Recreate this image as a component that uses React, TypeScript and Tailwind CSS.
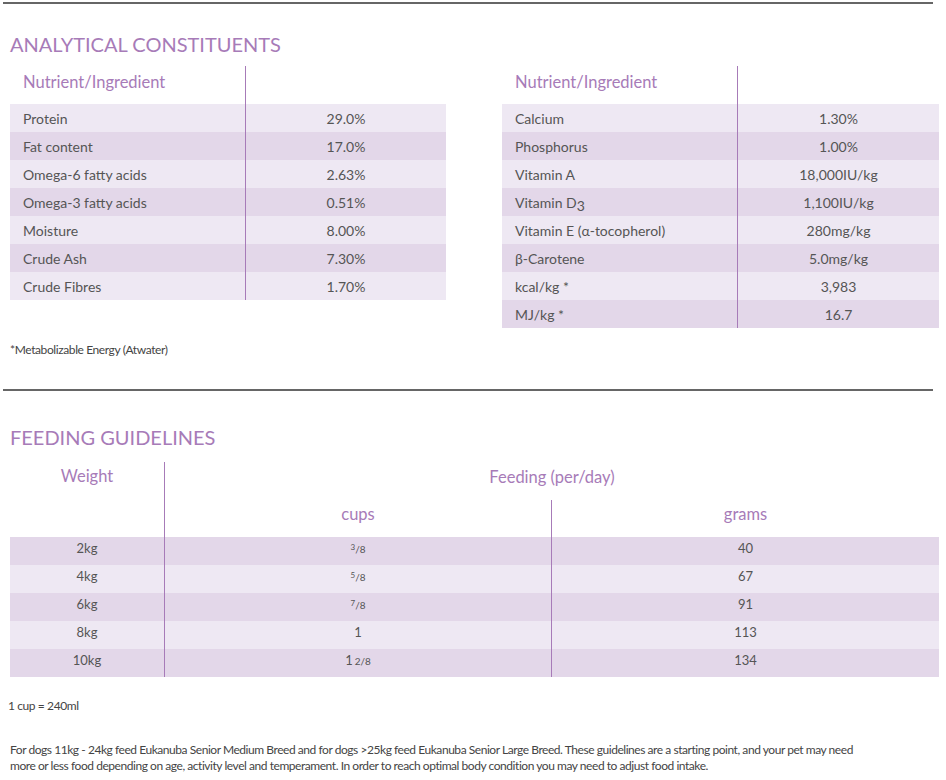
import React from 'react';

interface Row {
  name: React.ReactNode;
  value: string;
}

const leftRows: Row[] = [
  { name: 'Protein', value: '29.0%' },
  { name: 'Fat content', value: '17.0%' },
  { name: 'Omega-6 fatty acids', value: '2.63%' },
  { name: 'Omega-3 fatty acids', value: '0.51%' },
  { name: 'Moisture', value: '8.00%' },
  { name: 'Crude Ash', value: '7.30%' },
  { name: 'Crude Fibres', value: '1.70%' },
];

const rightRows: Row[] = [
  { name: 'Calcium', value: '1.30%' },
  { name: 'Phosphorus', value: '1.00%' },
  { name: 'Vitamin A', value: '18,000IU/kg' },
  {
    name: (
      <>
        Vitamin D<span className="relative top-[3px]">3</span>
      </>
    ),
    value: '1,100IU/kg',
  },
  { name: 'Vitamin E (α-tocopherol)', value: '280mg/kg' },
  { name: 'β-Carotene', value: '5.0mg/kg' },
  { name: 'kcal/kg *', value: '3,983' },
  { name: 'MJ/kg *', value: '16.7' },
];

function Frac({ n }: { n: string }) {
  return (
    <span className="text-[10px]">
      <span className="relative -top-[3px] text-[8px]">{n}</span>/8
    </span>
  );
}

const feeding = [
  { weight: '2kg', cups: <Frac n="3" />, grams: '40' },
  { weight: '4kg', cups: <Frac n="5" />, grams: '67' },
  { weight: '6kg', cups: <Frac n="7" />, grams: '91' },
  { weight: '8kg', cups: <span className="text-[13px]">1</span>, grams: '113' },
  {
    weight: '10kg',
    cups: (
      <>
        <span className="text-[13px]">1</span>
        <span className="ml-[2px] text-[10px]">2/8</span>
      </>
    ),
    grams: '134',
  },
];

const NutrientTable = ({ rows, width }: { rows: Row[]; width: string }) => (
  <div className={width}>
    <div className="flex h-[38px]">
      <div className="flex w-[236px] items-center border-r border-[#a77bb8] pb-[6px] pl-[13px] text-[16.5px] text-[#a77bb8]">
        Nutrient/Ingredient
      </div>
      <div className="flex-1" />
    </div>
    {rows.map((row, i) => (
      <div
        key={i}
        className={`flex h-[28px] text-[14px] text-[#555] ${
          i % 2 === 0 ? 'bg-[#eee8f3]' : 'bg-[#e3d7e9]'
        }`}
      >
        <div className="flex w-[236px] items-center border-r border-[#a77bb8] pl-[13px]">
          {row.name}
        </div>
        <div className="flex flex-1 items-center justify-center">
          {row.value}
        </div>
      </div>
    ))}
  </div>
);

export default function App() {
  return (
    <div
      className="w-[946px] bg-white pt-[2px]"
      style={{ fontFamily: 'Lato, "Noto Sans", sans-serif' }}
    >
      <div className="ml-[3px] w-[930px] border-t-2 border-[#666]" />

      <h2 className="ml-[10px] mt-[28px] text-[20px] leading-[24px] text-[#a77bb8]">
        ANALYTICAL CONSTITUENTS
      </h2>

      <div className="ml-[10px] mt-[10px] flex items-start gap-[56px]">
        <NutrientTable rows={leftRows} width="w-[436px]" />
        <NutrientTable rows={rightRows} width="w-[437px]" />
      </div>

      <p className="ml-[10px] mt-[14px] text-[12px] leading-[16px] tracking-[-0.4px] text-[#444]">
        *Metabolizable Energy (Atwater)
      </p>

      <div className="ml-[3px] mt-[31px] w-[930px] border-t-2 border-[#666]" />

      <h2 className="ml-[10px] mt-[34px] text-[20px] leading-[24px] text-[#a77bb8]">
        FEEDING GUIDELINES
      </h2>

      <div className="ml-[10px] mt-[13px] w-[929px]">
        <div className="grid grid-cols-[155px_387px_387px] grid-rows-[38px_37px] text-[16.5px] text-[#a77bb8]">
          <div className="row-span-2 flex justify-center border-r border-[#a77bb8] pt-[2px]">
            Weight
          </div>
          <div className="col-span-2 flex items-center justify-center pb-[8px]">
            Feeding (per/day)
          </div>
          <div className="flex items-center justify-center border-r border-[#a77bb8] pb-[8px]">
            cups
          </div>
          <div className="flex items-center justify-center pb-[8px]">
            grams
          </div>
        </div>
        {feeding.map((row, i) => (
          <div
            key={i}
            className={`grid h-[28px] grid-cols-[155px_387px_387px] text-[13px] text-[#555] ${
              i % 2 === 0 ? 'bg-[#e3d7e9]' : 'bg-[#eee8f3]'
            }`}
          >
            <div className="flex items-center justify-center border-r border-[#a77bb8] pb-[4px]">
              {row.weight}
            </div>
            <div className="flex items-center justify-center border-r border-[#a77bb8] pb-[4px]">
              <span>{row.cups}</span>
            </div>
            <div className="flex items-center justify-center pb-[4px]">
              {row.grams}
            </div>
          </div>
        ))}
      </div>

      <p className="ml-[8px] mt-[21px] text-[12px] leading-[16px] tracking-[-0.4px] text-[#444]">
        1 cup = 240ml
      </p>

      <p className="ml-[10px] mt-[28px] w-[860px] pb-[8px] text-[12px] leading-[16px] tracking-[-0.45px] text-[#444]">
        For dogs 11kg - 24kg feed Eukanuba Senior Medium Breed and for dogs
        &gt;25kg feed Eukanuba Senior Large Breed. These guidelines are a
        starting point, and your pet may need more or less food depending on
        age, activity level and temperament. In order to reach optimal body
        condition you may need to adjust food intake.
      </p>
    </div>
  );
}
